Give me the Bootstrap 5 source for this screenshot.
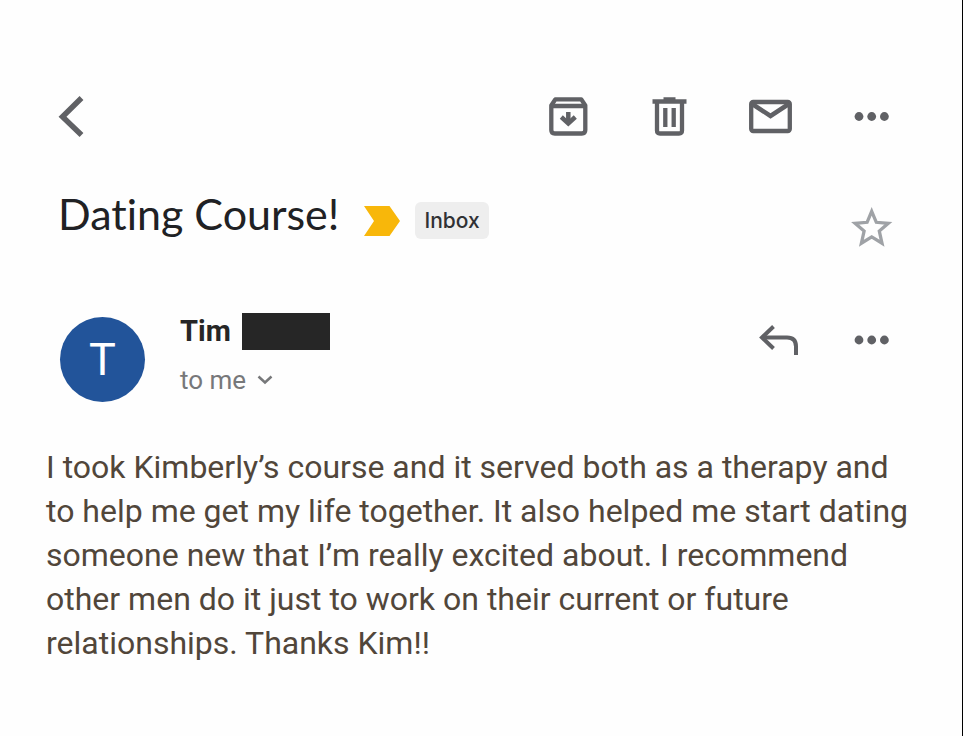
<!DOCTYPE html>
<html lang="en">
<head>
<meta charset="utf-8">
<meta name="viewport" content="width=device-width, initial-scale=1">
<title>Dating Course!</title>
<link href="https://cdn.jsdelivr.net/npm/bootstrap@5.3.0/dist/css/bootstrap.min.css" rel="stylesheet">
<style>
  body { font-family: Roboto, "Liberation Sans", sans-serif; background: #fefefe; border-right: 1px solid #000; }
  .mail-head { padding: 95px 68px 0 58px; }
  .icon-btn { color: #606165; line-height: 0; }
  .icon-btn svg, .star svg { width: 44px; height: 44px; }
  .tools { gap: 57px; }
  .subject-row { margin-top: 52px; }
  .subject { font: 400 43px/46px Lato, sans-serif; font-variant-ligatures: none; color: #202124; }
  .tags { padding-top: 11px; margin-left: 25px; gap: 15px; }
  .inbox-tag { font: 500 21px/37px Inter, sans-serif; color: #303134; background: #eee; border-radius: 6px; padding: 0 9px; }
  .star { color: #9fa2a6; margin-top: 15px; }
  .sender-row { margin-top: 63px; }
  .avatar { width: 85px; height: 85px; margin: 4px 35px 0 2px; background: #22549a; color: #fff; font-size: 45px; }
  .sender { font-size: 29px; line-height: 37px; color: #262626; gap: 11px; }
  .redacted { width: 88px; height: 37px; background: #262626; }
  .recipient { font-size: 26px; line-height: 32px; color: #77787a; margin-top: 14px; gap: 11px; }
  .reply-tools { gap: 50px; padding-top: 5px; }
  .message { padding: 43px 46px; font-size: 32px; line-height: 44px; color: #51463a; }
</style>
</head>
<body class="min-vh-100">
<header class="mail-head">
  <nav class="d-flex justify-content-between" aria-label="Message actions">
    <button type="button" class="btn p-0 border-0 icon-btn" aria-label="Back">
      <svg viewBox="0 0 44 44" fill="none" stroke="currentColor" stroke-width="5.500"><path d="M23.500 3 4.500 21.700l19 18.300"/></svg>
    </button>
    <div class="d-flex tools">
      <button type="button" class="btn p-0 border-0 icon-btn" aria-label="Archive">
        <svg viewBox="0 0 44 44" fill="none" stroke="currentColor" stroke-width="4.300"><path d="M4.300 10.500 8.300 4.300h26l4 6.200V35q0 3.500-3.500 3.500h-27Q4.300 38.500 4.300 35z" stroke-linejoin="round"/><path d="M4.300 11h34"/><path d="M21.300 17v10" stroke-width="4.500"/><path d="m14.300 22 7 6.500 7-6.500" stroke-width="4.500"/></svg>
      </button>
      <button type="button" class="btn p-0 border-0 icon-btn" aria-label="Delete">
        <svg viewBox="0 0 44 44" fill="none" stroke="currentColor" stroke-width="4.300"><path d="M4.500 6.500h34M15.500 4.500h12"/><path d="M9 7v28.500q0 3 3 3h19q3 0 3-3V7"/><path d="M17.300 13v19M25.700 13v19"/></svg>
      </button>
      <button type="button" class="btn p-0 border-0 icon-btn" aria-label="Mark unread">
        <svg viewBox="0 0 44 44" fill="none" stroke="currentColor" stroke-width="4.300"><rect x="2.200" y="7" width="38.600" height="29" rx="2"/><path d="m2.500 8.500 19 12.500L40.500 8.500" stroke-width="4.500"/></svg>
      </button>
      <button type="button" class="btn p-0 border-0 icon-btn" aria-label="More options">
        <svg viewBox="0 0 44 44" fill="currentColor"><circle cx="9" cy="21.500" r="4.400"/><circle cx="21.700" cy="21.500" r="4.400"/><circle cx="34.400" cy="21.500" r="4.400"/></svg>
      </button>
    </div>
  </nav>

  <div class="d-flex align-items-start subject-row">
    <h1 class="subject mb-0">Dating Course!</h1>
    <div class="d-flex align-items-center tags">
      <svg width="36" height="30" viewBox="0 0 36 30" role="img" aria-label="Important"><path fill="#f8b70a" d="M0 0h25.500L36 15 25.500 30H0l10-15z"/></svg>
      <span class="inbox-tag">Inbox</span>
    </div>
    <button type="button" class="btn p-0 border-0 lh-1 ms-auto star" aria-label="Star">
      <svg class="d-block" viewBox="0 0 44 44" fill="none" stroke="currentColor" stroke-width="3.300"><path d="m21.700 5.300 4.600 11 12 1-9 7.800 2.700 12.100-10.300-6.300-10.300 6.300 2.700-12.100-9-7.800 12-1z"/></svg>
    </button>
  </div>

  <div class="d-flex align-items-start sender-row">
    <div class="rounded-circle d-flex align-items-center justify-content-center avatar" aria-hidden="true">T</div>
    <div>
      <div class="d-flex fw-bold sender"><span>Tim</span><span class="redacted"></span></div>
      <button type="button" class="btn p-0 border-0 d-flex align-items-center recipient">to me
        <svg width="16" height="10" viewBox="0 0 16 10" fill="none" stroke="currentColor" stroke-width="2.500"><path d="m1.500 1.500 6.500 6 6.500-6"/></svg>
      </button>
    </div>
    <div class="d-flex ms-auto reply-tools">
      <button type="button" class="btn p-0 border-0 icon-btn" aria-label="Reply">
        <svg viewBox="0 0 44 44" fill="none" stroke="currentColor" stroke-width="4"><path d="M17.500 8.500 6 19.500l11.500 11"/><path d="M6 19.500h25q9 0 9 9V37"/></svg>
      </button>
      <button type="button" class="btn p-0 border-0 icon-btn" aria-label="More message options">
        <svg viewBox="0 0 44 44" fill="currentColor"><circle cx="9" cy="22" r="4.400"/><circle cx="21.700" cy="22" r="4.400"/><circle cx="34.400" cy="22" r="4.400"/></svg>
      </button>
    </div>
  </div>
</header>
<main class="message">
  <p class="mb-0">I took Kimberly’s course and it served both as a therapy and to help me get my life together. It also helped me start dating someone new that I’m really excited about. I recommend other men do it just to work on their current or future relationships. Thanks Kim!!</p>
</main>
<script src="https://cdn.jsdelivr.net/npm/bootstrap@5.3.0/dist/js/bootstrap.bundle.min.js"></script>
</body>
</html>
